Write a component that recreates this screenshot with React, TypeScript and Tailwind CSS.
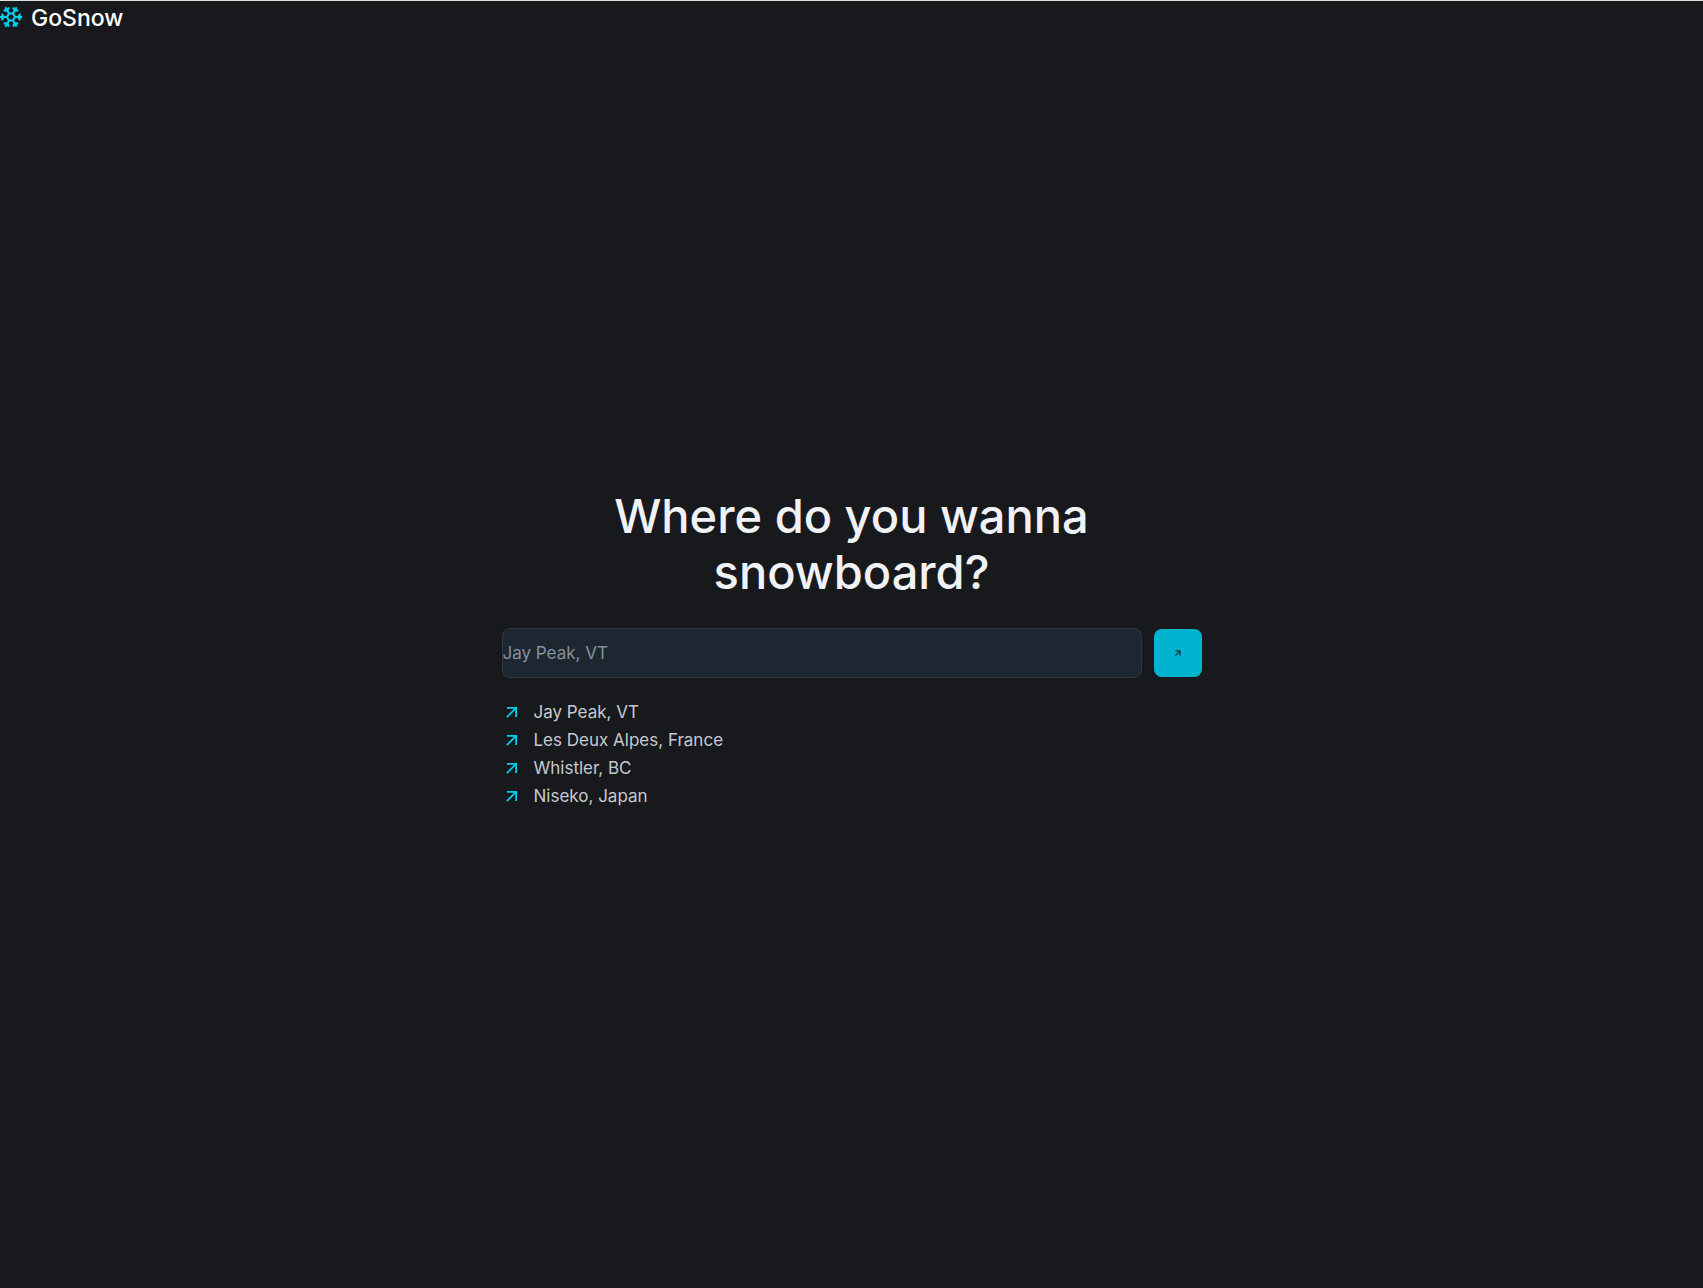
const places = ["Jay Peak, VT", "Les Deux Alpes, France", "Whistler, BC", "Niseko, Japan"];

function Snowflake() {
  return (
    <svg viewBox="-12 -12 24 24" className="size-6 shrink-0" fill="none" stroke="currentColor" strokeWidth="2.1" aria-hidden="true">
      <path d="M4 0L2 3.5H-2L-4 0L-2 -3.5H2Z" />
      {[0, 60, 120, 180, 240, 300].map((angle) => (
        <path key={angle} transform={`rotate(${angle})`} d="M4 0H11.2M9.4 -3L7 0L9.4 3" />
      ))}
    </svg>
  );
}

function ArrowUpRight({ size, weight, className = "" }: { size: number; weight: number; className?: string }) {
  return (
    <svg
      viewBox="0 0 24 24"
      width={size}
      height={size}
      className={`shrink-0 ${className}`}
      fill="none"
      stroke="currentColor"
      strokeWidth={weight}
      aria-hidden="true"
    >
      <path d="M6 7H17V18M17 7L5.8 18.2" />
    </svg>
  );
}

export default function App() {
  return (
    <div className="flex min-h-screen flex-col border-t border-[#dbe5de] bg-[#18191d] font-['Inter',sans-serif] text-[#f1f2f6]">
      <header className="flex h-8 items-center gap-2 text-[#00d0f0]">
        <div className="-ml-px">
          <Snowflake />
        </div>
        <span className="pt-0.5 text-[23px] leading-8 font-medium text-white">GoSnow</span>
      </header>
      <main className="flex grow flex-col items-center justify-center px-4 pb-6">
        <div className="w-full max-w-[700px]">
          <h1 className="mx-auto mb-7 max-w-[560px] text-center text-[47px] leading-[56px] font-medium">
            Where do you wanna snowboard?
          </h1>
          <form className="flex items-center gap-3" onSubmit={(e) => e.preventDefault()}>
            <input
              type="text"
              aria-label="Destination"
              placeholder="Jay Peak, VT"
              className="h-[50px] min-w-0 grow rounded-lg border border-[#2d3748] bg-[#1d2732] text-[17px] text-white placeholder:text-[#87909b] focus:outline-none"
            />
            <button
              type="submit"
              aria-label="Search"
              className="flex size-12 shrink-0 items-center justify-center rounded-lg bg-[#00b4d0] text-[#16313c]"
            >
              <ArrowUpRight size={10} weight={3} />
            </button>
          </form>
          <ul className="mt-5">
            {places.map((place) => (
              <li key={place}>
                <a href="#" className="flex items-center gap-3 text-[17px] leading-7 text-[#c6c9d0]">
                  <ArrowUpRight size={20} weight={2.2} className="text-[#00cbec]" />
                  {place}
                </a>
              </li>
            ))}
          </ul>
        </div>
      </main>
    </div>
  );
}
